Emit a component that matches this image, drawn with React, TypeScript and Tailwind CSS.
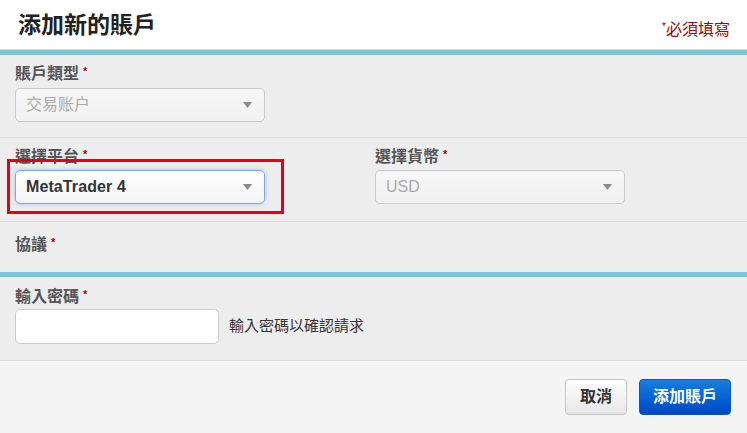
import React, { FC } from 'react'

const font = { fontFamily: '"Liberation Sans", "Noto Sans CJK TC", sans-serif' }

const Label: FC<{ text: string }> = ({ text }) => (
  <div className="flex items-start h-[20px] text-[16px] leading-[20px] font-bold text-[#555]">
    {text}
    <span className="ml-[4px] text-[11px] leading-[14px] text-[#b00000]">*</span>
  </div>
)

const Arrow: FC = () => (
  <svg width="9" height="6" viewBox="0 0 9 6" className="shrink-0">
    <path d="M0 0 H9 L4.5 6 Z" fill="#8a8a8a" />
  </svg>
)

const Select: FC<{ value: string; disabled?: boolean; focused?: boolean }> = ({ value, disabled, focused }) => (
  <div
    className={
      disabled
        ? 'flex items-center justify-between w-[250px] h-[34px] rounded-[5px] border border-[#cacaca] bg-gradient-to-b from-[#f7f7f7] to-[#f1f1f1] pl-[10px] pr-[12px] text-[16px] text-[#aaaaaa]'
        : 'flex items-center justify-between w-[250px] h-[34px] rounded-[5px] border border-[#7aa7ee] bg-gradient-to-b from-white to-[#f3f3f3] shadow-[0_0_4px_rgba(80,140,230,0.45)] pl-[10px] pr-[12px] text-[16px] font-bold text-[#333]'
    }
  >
    <span className={focused ? 'tracking-[0.1px]' : ''}>{value}</span>
    <Arrow />
  </div>
)

const App: FC = () => {
  return (
    <div className="w-[747px] h-[433px] overflow-hidden bg-white flex flex-col" style={font}>
      <div className="h-[50px] shrink-0 bg-white border-b border-[#e2e2e2] flex items-center justify-between pl-[18px] pr-[17px]">
        <h1 className="mt-[2px] text-[23px] font-bold text-[#222] leading-none">添加新的賬戶</h1>
        <span className="mt-[10px] text-[16px] text-[#9b0a0a]">
          <span className="text-[11px] align-top">*</span>必須填寫
        </span>
      </div>
      <div className="h-[5px] shrink-0 bg-[#83c1d7]" />

      <div className="h-[83px] shrink-0 bg-[#ededed] border-b border-[#dedede] px-[15px] pt-[9px]">
        <Label text="賬戶類型" />
        <div className="mt-[4px]">
          <Select value="交易账户" disabled />
        </div>
      </div>

      <div className="h-[84px] shrink-0 bg-[#ededed] border-b border-[#dedede] px-[15px] pt-[9px] flex">
        <div className="w-[360px]">
          <Label text="選擇平台" />
          <div className="relative mt-[3px] w-[250px]">
            <Select value="MetaTrader 4" focused />
            <div className="absolute -left-[8px] -top-[11px] w-[277px] h-[55px] border-[3px] border-[#e2001a] pointer-events-none" />
          </div>
        </div>
        <div>
          <Label text="選擇貨幣" />
          <div className="mt-[3px]">
            <Select value="USD" disabled />
          </div>
        </div>
      </div>

      <div className="h-[50px] shrink-0 bg-[#ededed] px-[15px] pt-[13px]">
        <Label text="協議" />
      </div>
      <div className="h-[5px] shrink-0 bg-[#83c1d7]" />

      <div className="h-[84px] shrink-0 bg-[#ededed] border-b border-[#dcdcdc] px-[15px] pt-[10px]">
        <Label text="輸入密碼" />
        <div className="mt-[2px] flex items-center">
          <input
            type="password"
            className="w-[204px] h-[35px] rounded-[5px] border border-[#cacaca] bg-white outline-none"
          />
          <span className="ml-[10px] text-[15px] text-[#333]">輸入密碼以確認請求</span>
        </div>
      </div>

      <div className="flex-1 bg-[#f4f4f4] flex items-start justify-end gap-[12px] pr-[16px] pt-[18px]">
        <button className="w-[62px] h-[36px] rounded-[4px] border border-[#c4c4c4] bg-gradient-to-b from-white to-[#e6e6e6] text-[16px] font-bold text-[#333]">
          取消
        </button>
        <button className="w-[92px] h-[36px] rounded-[4px] border border-[#0a56c0] bg-gradient-to-b from-[#1a7ee0] to-[#0047c6] text-[16px] font-bold text-white">
          添加賬戶
        </button>
      </div>
    </div>
  )
}

export default App
